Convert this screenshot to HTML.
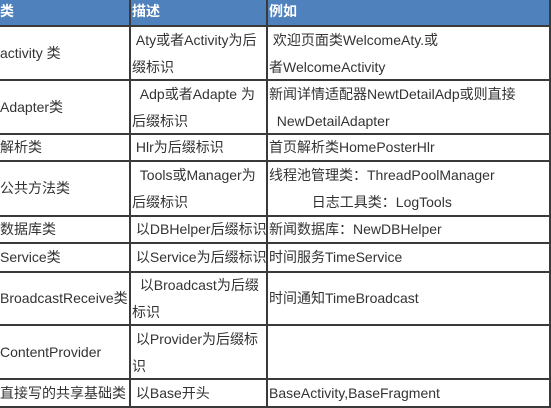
<!DOCTYPE html>
<html><head><meta charset="utf-8"><style>
body{margin:0;width:551px;height:408px;overflow:hidden;background:#fff;position:relative;font-family:"Liberation Sans","Noto Sans CJK SC",sans-serif;font-size:14px;color:#333}
.h{position:absolute;left:0;width:551px;height:2px;background:#3a3a3a}
.v{position:absolute;top:0;width:2px;height:408px;background:#3a3a3a}
.t{position:absolute;line-height:27px;white-space:nowrap}
.hd{position:absolute;left:0;top:0;width:551px;height:26px;background:#4f81bd}
.w{color:#fff;font-weight:bold}
</style></head><body>
<div class="hd"></div>
<div class="h" style="top:25px"></div>
<div class="h" style="top:79px"></div>
<div class="h" style="top:133px"></div>
<div class="h" style="top:160px"></div>
<div class="h" style="top:215px"></div>
<div class="h" style="top:242px"></div>
<div class="h" style="top:271px"></div>
<div class="h" style="top:324px"></div>
<div class="h" style="top:378px"></div>
<div class="h" style="top:406px"></div>
<div class="v" style="left:129px"></div>
<div class="v" style="left:266px"></div>
<div class="v" style="left:549px"></div>

<div class="t w" style="left:0;top:-2px">类</div>
<div class="t w" style="left:132px;top:-2px">描述</div>
<div class="t w" style="left:269px;top:-2px">例如</div>

<div class="t" style="left:0;top:40px">activity 类</div>
<div class="t" style="left:132px;top:27px">&nbsp;Aty或者Activity为后<br>缀标识</div>
<div class="t" style="left:269px;top:27px">&nbsp;欢迎页面类WelcomeAty.或<br>者WelcomeActivity</div>

<div class="t" style="left:0;top:94px">Adapter类</div>
<div class="t" style="left:132px;top:81px">&nbsp;&nbsp;Adp或者Adapte 为<br>后缀标识</div>
<div class="t" style="left:269px;top:81px">新闻详情适配器NewtDetailAdp或则直接<br>&nbsp;&nbsp;NewDetailAdapter</div>

<div class="t" style="left:0;top:134px">解析类</div>
<div class="t" style="left:132px;top:134px">&nbsp;Hlr为后缀标识</div>
<div class="t" style="left:269px;top:134px">首页解析类HomePosterHlr</div>

<div class="t" style="left:0;top:175px">公共方法类</div>
<div class="t" style="left:132px;top:162px">&nbsp;&nbsp;Tools或Manager为<br>后缀标识</div>
<div class="t" style="left:269px;top:162px">线程池管理类：ThreadPoolManager<br>&nbsp;&nbsp;&nbsp;&nbsp;&nbsp;&nbsp;&nbsp;&nbsp;&nbsp;&nbsp;&nbsp;日志工具类：LogTools</div>

<div class="t" style="left:0;top:216px">数据库类</div>
<div class="t" style="left:132px;top:216px">&nbsp;以DBHelper后缀标识</div>
<div class="t" style="left:269px;top:216px">新闻数据库：NewDBHelper</div>

<div class="t" style="left:0;top:244px">Service类</div>
<div class="t" style="left:132px;top:244px">&nbsp;以Service为后缀标识</div>
<div class="t" style="left:269px;top:244px">时间服务TimeService</div>

<div class="t" style="left:0;top:285px">BroadcastReceive类</div>
<div class="t" style="left:132px;top:272px">&nbsp;&nbsp;以Broadcast为后缀<br>标识</div>
<div class="t" style="left:269px;top:285px">时间通知TimeBroadcast</div>

<div class="t" style="left:0;top:339px">ContentProvider</div>
<div class="t" style="left:132px;top:326px">&nbsp;以Provider为后缀标<br>识</div>

<div class="t" style="left:0;top:380px">直接写的共享基础类</div>
<div class="t" style="left:132px;top:380px">&nbsp;以Base开头</div>
<div class="t" style="left:269px;top:380px">BaseActivity,BaseFragment</div>
</body></html>
